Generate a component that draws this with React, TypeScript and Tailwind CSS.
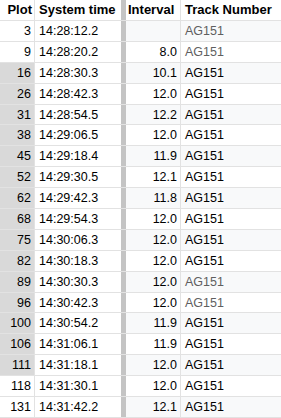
import React from "react";

type Row = { plot: number; time: string; interval: string; faded?: boolean };

const rows: Row[] = [
  { plot: 3, time: "14:28:12.2", interval: "", faded: true },
  { plot: 9, time: "14:28:20.2", interval: "8.0", faded: true },
  { plot: 16, time: "14:28:30.3", interval: "10.1" },
  { plot: 26, time: "14:28:42.3", interval: "12.0" },
  { plot: 31, time: "14:28:54.5", interval: "12.2" },
  { plot: 38, time: "14:29:06.5", interval: "12.0" },
  { plot: 45, time: "14:29:18.4", interval: "11.9" },
  { plot: 52, time: "14:29:30.5", interval: "12.1" },
  { plot: 62, time: "14:29:42.3", interval: "11.8" },
  { plot: 68, time: "14:29:54.3", interval: "12.0" },
  { plot: 75, time: "14:30:06.3", interval: "12.0" },
  { plot: 82, time: "14:30:18.3", interval: "12.0" },
  { plot: 89, time: "14:30:30.3", interval: "12.0", faded: true },
  { plot: 96, time: "14:30:42.3", interval: "12.0", faded: true },
  { plot: 100, time: "14:30:54.2", interval: "11.9" },
  { plot: 106, time: "14:31:06.1", interval: "11.9" },
  { plot: 111, time: "14:31:18.1", interval: "12.0" },
  { plot: 118, time: "14:31:30.1", interval: "12.0" },
  { plot: 131, time: "14:31:42.2", interval: "12.1" },
];

const App = () => {
  return (
    <div
      className="w-[281px] h-[418px] overflow-hidden bg-white text-black"
      style={{ fontFamily: '"Liberation Sans", Arial, sans-serif' }}
    >
      {/* header */}
      <div className="flex h-[21px] border-b border-[#e2e2e2] text-[13px] font-bold leading-[20px]">
        <div className="w-[35px] border-r border-[#e2e2e2] pr-[2px] text-right">Plot</div>
        <div className="w-[86px] pl-[4px]">System time</div>
        <div className="w-[5px] bg-[#c4c4c4]" />
        <div className="w-[55px] border-r border-[#e2e2e2] pl-[2px]">Interval</div>
        <div className="flex-1 pl-[4px]">Track Number</div>
      </div>

      {rows.map((r, i) => {
        const shaded = r.plot >= 16 && r.plot <= 111;
        const band = i % 2 === 0 ? "bg-[#f8f9fa]" : "bg-white";
        return (
          <div
            key={r.plot}
            className="flex h-[20.9px] border-b border-[#e2e2e2] text-[12.5px] leading-[20px]"
          >
            <div
              className={
                "w-[35px] border-r border-[#e2e2e2] pr-[3px] text-right " +
                (shaded ? "bg-[#d9d9d9]" : "bg-white")
              }
            >
              {r.plot}
            </div>
            <div className="w-[86px] pl-[4px]">{r.time}</div>
            <div className="w-[5px] bg-[#c4c4c4]" />
            <div className={"w-[55px] border-r border-[#e2e2e2] pr-[3px] text-right " + band}>
              {r.interval}
            </div>
            <div className={"flex-1 pl-[4px] " + band + (r.faded ? " text-[#5f5f5f]" : "")}>
              AG151
            </div>
          </div>
        );
      })}
    </div>
  );
};

export default App;
